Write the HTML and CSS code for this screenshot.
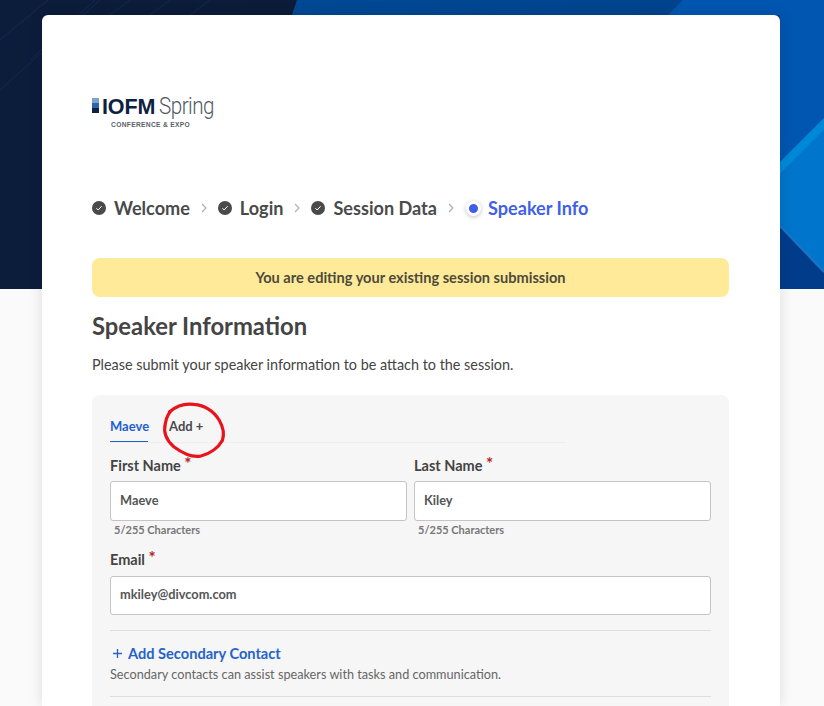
FILE: index.html
```html
<!DOCTYPE html>
<html lang="en">
<head>
<meta charset="utf-8">
<title>Speaker Information</title>
<link rel="stylesheet" href="styles.css">
</head>
<body>
<div class="hero">
  <svg class="hero-art" viewBox="0 0 824 289" preserveAspectRatio="none" aria-hidden="true">
    <defs>
      <linearGradient id="navy" x1="0" x2="1" y1="0" y2="0">
        <stop offset="0" stop-color="#0c1d3c"/>
        <stop offset="1" stop-color="#0c1830"/>
      </linearGradient>
      <linearGradient id="blue" x1="0" x2="1" y1="0" y2="1">
        <stop offset="0" stop-color="#004a96"/>
        <stop offset="1" stop-color="#003a80"/>
      </linearGradient>
    </defs>
    <rect width="824" height="289" fill="url(#navy)"/>
    <g stroke="#16305a" stroke-width="1" opacity=".7">
      <path d="M0 40 48 0M0 90 100 0M30 60 95 0M110 15 130 0M150 15 170 0M190 15 210 0"/>
    </g>
    <polygon points="297,0 824,0 824,289 197,289" fill="url(#blue)"/>
    <polygon points="668,15 683,0 824,0 824,289 780,289 780,15" fill="#0056b0"/>
    <polygon points="780,174 824,130 824,272 780,226" fill="#0075cc"/>
    <polygon points="780,162 824,118 824,130 780,174" fill="#0088d8"/>
    <polygon points="780,226 824,272 824,289 780,289" fill="#003c8a"/>
    <path d="M780 226 824 272" stroke="#1f72c4" stroke-width="2"/>
  </svg>
</div>

<main class="card">
  <div class="logo">
    <div class="logo-mark"><i class="bar-a"></i><i class="bar-b"></i><i class="bar-c"></i></div>
    <div class="logo-text">
      <div class="logo-line"><b>IOFM</b><span>Spring</span></div>
      <div class="logo-sub">CONFERENCE &amp; EXPO</div>
    </div>
  </div>

  <nav class="steps">
    <div class="step"><svg class="check" viewBox="0 0 14 14"><circle cx="7" cy="7" r="7" fill="#4a4a4a"/><path d="M4.4 7.2 6.2 9 9.6 5.2" fill="none" stroke="#fff" stroke-width="1"/></svg>Welcome</div>
    <svg class="chev" viewBox="0 0 6 10"><path d="M1 1 5 5 1 9" fill="none" stroke="#b0b0b0" stroke-width="1.2"/></svg>
    <div class="step"><svg class="check" viewBox="0 0 14 14"><circle cx="7" cy="7" r="7" fill="#4a4a4a"/><path d="M4.4 7.2 6.2 9 9.6 5.2" fill="none" stroke="#fff" stroke-width="1"/></svg>Login</div>
    <svg class="chev" viewBox="0 0 6 10"><path d="M1 1 5 5 1 9" fill="none" stroke="#b0b0b0" stroke-width="1.2"/></svg>
    <div class="step"><svg class="check" viewBox="0 0 14 14"><circle cx="7" cy="7" r="7" fill="#4a4a4a"/><path d="M4.4 7.2 6.2 9 9.6 5.2" fill="none" stroke="#fff" stroke-width="1"/></svg>Session Data</div>
    <svg class="chev" viewBox="0 0 6 10"><path d="M1 1 5 5 1 9" fill="none" stroke="#b0b0b0" stroke-width="1.2"/></svg>
    <div class="step current"><span class="dot"></span>Speaker Info</div>
  </nav>

  <div class="notice">You are editing your existing session submission</div>

  <h1>Speaker Information</h1>
  <p class="intro">Please submit your speaker information to be attach to the session.</p>

  <section class="panel">
    <div class="tabs">
      <div class="tab active">Maeve</div>
      <div class="tab">Add +</div>
      <svg class="scribble" viewBox="0 0 70 60" aria-hidden="true"><path d="M10 9C17 3 26 1 33 2 44 3 52 9 57 17 61 24 62 30 60 36 56 43 48 49 39 51 31 52 22 48 14 42 7 36 4 28 6 20 7 14 9 9 14 6" fill="none" stroke="#e8141c" stroke-width="3" stroke-linecap="round"/></svg>
    </div>

    <div class="row">
      <div class="field">
        <label>First Name <em>*</em></label>
        <div class="input">Maeve</div>
        <div class="count">5/255 Characters</div>
      </div>
      <div class="field">
        <label>Last Name <em>*</em></label>
        <div class="input">Kiley</div>
        <div class="count">5/255 Characters</div>
      </div>
    </div>

    <div class="field email">
      <label>Email <em>*</em></label>
      <div class="input">mkiley@divcom.com</div>
    </div>

    <div class="secondary">
      <div class="add-link"><svg class="plus" viewBox="0 0 10 10"><path d="M5 0V10M0 5H10" stroke="#2563c9" stroke-width="1.5"/></svg>Add Secondary Contact</div>
      <p>Secondary contacts can assist speakers with tasks and communication.</p>
    </div>
    <div class="rest"></div>
  </section>
</main>
</body>
</html>
```
FILE: styles.css
```css
* { box-sizing: border-box; }
html, body { margin: 0; height: 706px; overflow: hidden; }
body {
  position: relative;
  background: #fafafa;
  font-family: "Lato", "Open Sans", sans-serif;
  color: #444;
}
.hero { position: absolute; left: 0; top: 0; width: 100%; height: 289px; }
.hero-art { display: block; width: 100%; height: 100%; }
.card {
  position: relative;
  width: 738px;
  margin: 15px 0 0 42px;
  padding: 0 51px 0 50px;
  background: #fff;
  border-radius: 6px 6px 0 0;
  box-shadow: 0 0 14px rgba(0,0,0,.12);
  height: 691px;
  overflow: hidden;
}
.logo { display: flex; gap: 3px; padding-top: 81px; height: 169px; }
.logo-mark { display: flex; flex-direction: column; width: 7px; height: 15px; margin-top: 2px; }
.logo-mark i { display: block; }
.bar-a { height: 5px; background: #7aa3cf; }
.bar-b { height: 5px; background: #2c66a5; }
.bar-c { height: 5px; background: #0b2244; }
.logo-text { width: 112px; }
.logo-line { display: flex; align-items: baseline; height: 20px; line-height: 20px; }
.logo-line b { font: 700 21.5px/20px "Liberation Sans", sans-serif; letter-spacing: -.1px; color: #0d2140; }
.logo-line span { font: 300 24px/20px "Roboto", sans-serif; letter-spacing: -.6px; color: #525a66; margin-left: 4px; transform: scaleX(.86); transform-origin: left; }
.logo-sub { margin: 5px 0 0 9px; font: 700 6.7px/8px "Liberation Sans", sans-serif; letter-spacing: .3px; color: #5a5f66; white-space: nowrap; }
.steps { display: flex; align-items: center; height: 48px; font-size: 18.1px; font-weight: 700; color: #4a4a4a; }
.step { display: flex; align-items: center; gap: 8px; white-space: nowrap; }
.check { width: 14px; height: 14px; flex: none; }
.chev { width: 6px; height: 10px; margin: 0 11px; flex: none; }
.step.current { color: #3f5fe8; gap: 7px; margin-left: 1px; }
.dot {
  width: 15px; height: 15px; border-radius: 50%; flex: none;
  background: #3f5fe8; border: 3px solid #fff;
  box-shadow: 0 1px 4px rgba(0,0,0,.25);
}
.notice {
  margin-top: 26px;
  height: 39px;
  line-height: 39px;
  border-radius: 8px;
  background: #ffea99;
  text-align: center;
  font-size: 14.6px;
  font-weight: 700;
  color: #4d4a3a;
}
h1 { margin: 0; padding-top: 15px; font-size: 23.8px; line-height: 28px; font-weight: 700; color: #444; }
.intro { margin: 15px 0 0; font-size: 14.4px; line-height: 20px; color: #444; }
.panel {
  margin-top: 20px;
  padding: 0 18px;
  background: #f6f6f6;
  border-radius: 8px;
  height: 400px;
}
.tabs {
  position: relative;
  display: flex;
  gap: 21px;
  width: 456px;
  height: 48px;
  border-bottom: 1px solid #eeeeee;
  padding-top: 22px;
  font-size: 13px;
  font-weight: 700;
  color: #4a4a4a;
}
.tab { height: 25px; line-height: 19px; }
.tab.active { color: #1f60d0; border-bottom: 1px solid #1f60d0; width: 38px; }
.scribble { position: absolute; left: 49px; top: 7px; width: 74px; height: 64px; overflow: visible; }
.row { display: flex; gap: 7px; margin-top: 12px; }
.row .field { flex: 1; }
.field label { display: block; height: 21px; padding-top: 1px; font-size: 14.5px; font-weight: 700; line-height: 20px; color: #444; }
.field em { color: #b3261e; font-style: normal; font-size: 17px; line-height: 0; position: relative; top: -1px; }
.input {
  height: 40px;
  margin-top: 5px;
  padding: 0 9px;
  line-height: 36px;
  background: #fff;
  border: 1px solid #c4c4c4;
  border-radius: 3px;
  font-size: 12.8px;
  font-weight: 700;
  color: #555;
}
.count { margin: 2px 0 0 4px; font-size: 11px; font-weight: 700; line-height: 13px; color: #777; }
.email { margin-top: 13px; }
.email .input { height: 39px; margin-top: 6px; line-height: 35px; }
.secondary { margin-top: 15px; border-top: 1px solid #dedede; padding-top: 12px; border-bottom: 1px solid #dedede; height: 67px; }
.add-link { display: flex; align-items: center; gap: 6px; height: 20px; padding-left: 3px; font-size: 14.6px; font-weight: 700; color: #2563c9; }
.plus { width: 9px; height: 9px; }
.secondary p { margin: 2px 0 0; font-size: 12.7px; line-height: 18px; color: #666; }
.rest { height: 40px; }
```
